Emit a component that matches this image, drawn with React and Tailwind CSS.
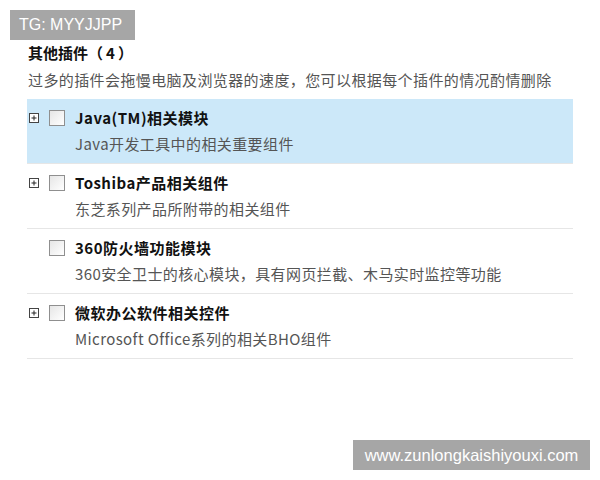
import React from "react"

const plugins = [
  { title: "Java(TM)相关模块", desc: "Java开发工具中的相关重要组件", expand: true, active: true },
  { title: "Toshiba产品相关组件", desc: "东芝系列产品所附带的相关组件", expand: true },
  { title: "360防火墙功能模块", desc: "360安全卫士的核心模块，具有网页拦截、木马实时监控等功能", expand: false },
  { title: "微软办公软件相关控件", desc: "Microsoft Office系列的相关BHO组件", expand: true },
]

function PlusBox() {
  return (
    <svg width="10" height="10" viewBox="0 0 10 10" className="block">
      <rect x="0.5" y="0.5" width="9" height="9" fill="#fff" stroke="#444" />
      <path d="M2.5 5h5M5 2.5v5" stroke="#222" strokeWidth="1" />
    </svg>
  )
}

function PluginRow({ plugin }) {
  return (
    <div
      className={
        "flex h-[65px] border-b border-[#e6e6e6] " + (plugin.active ? "bg-[#cce8f9]" : "bg-white")
      }>
      <div className="w-[22px] shrink-0 pl-[2px] pt-[14px]">{plugin.expand && <PlusBox />}</div>
      <div className="pt-[11px]">
        <div className="h-[16px] w-[16px] border border-[#8f8f8f] bg-gradient-to-br from-[#e6e6e6] to-white" />
      </div>
      <div className="pl-[10px] pt-[9px]">
        <div className="text-[15px] font-bold leading-[20px] tracking-[0.5px] text-[#111]">{plugin.title}</div>
        <div className="mt-[6px] text-[15px] leading-[20px] tracking-[0.4px] text-[#555]">{plugin.desc}</div>
      </div>
    </div>
  )
}

export default function App() {
  return (
    <div
      className="relative h-[480px] w-[600px] overflow-hidden bg-white"
      style={{ fontFamily: '"Noto Sans CJK SC", "Noto Sans", sans-serif' }}>
      <div
        className="absolute left-[10px] top-[10px] flex h-[30px] w-[125px] items-center bg-[#a6a6a6] pl-[9px] text-[16px] text-white"
        style={{ fontFamily: '"Liberation Sans", Arial, sans-serif' }}>
        TG: MYYJJPP
      </div>

      <div className="pl-[27px] pr-[27px] pt-[42px]">
        <div className="pl-[1px] text-[15px] font-bold leading-[22px] text-[#111]">
          其他插件（<span className="mx-[3px]">4</span>）
        </div>
        <div className="mt-[5px] pl-[1px] text-[15px] leading-[22px] tracking-[0.4px] text-[#555]">
          过多的插件会拖慢电脑及浏览器的速度，您可以根据每个插件的情况酌情删除
        </div>
        <div className="mt-[8px]">
          {plugins.map((p, i) => (
            <PluginRow key={i} plugin={p} />
          ))}
        </div>
      </div>

      <div
        className="absolute left-[353px] top-[440px] flex h-[30px] w-[237px] items-center justify-center bg-[#a6a6a6] text-[16.5px] text-white"
        style={{ fontFamily: '"Liberation Sans", Arial, sans-serif' }}>
        www.zunlongkaishiyouxi.com
      </div>
    </div>
  )
}
